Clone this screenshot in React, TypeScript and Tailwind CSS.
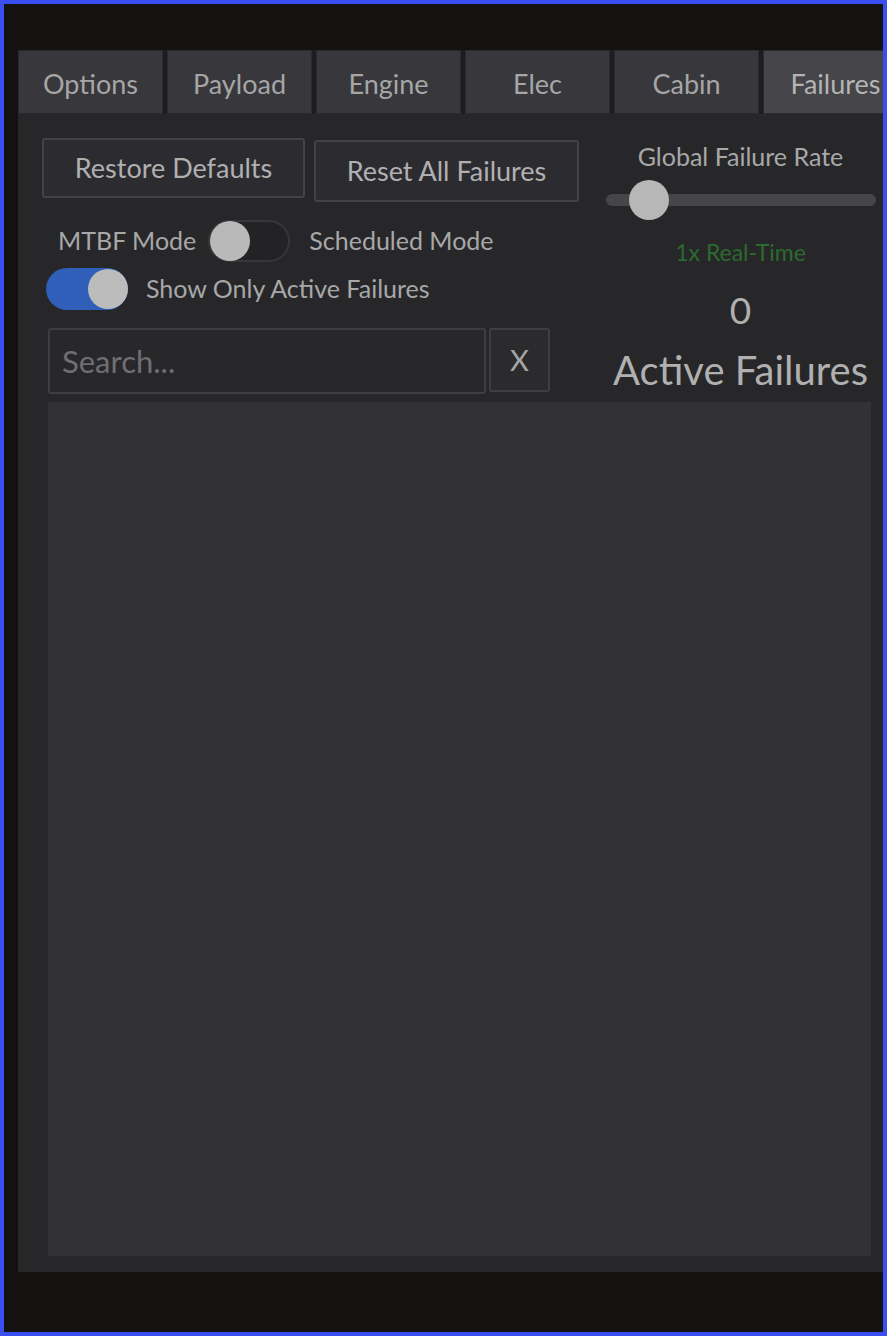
export default function App() {
  const tabs = ["Options", "Payload", "Engine", "Elec", "Cabin", "Failures"];

  return (
    <div
      className="w-[887px] h-[1336px] border-4 border-[#3b4ef2] bg-[#131211] overflow-hidden flex"
      style={{ fontFamily: "Lato, 'Open Sans', sans-serif" }}
    >
      <div className="mt-[46px] ml-[14px] flex-1 h-[1222px] flex flex-col bg-[#27272a] overflow-hidden">
        {/* tabs */}
        <div className="flex gap-[4px] h-[64px] bg-[#1d1d1f] shrink-0">
          {tabs.map((t) => (
            <div
              key={t}
              className={
                "w-[145px] shrink-0 flex items-center justify-center pt-[4px] text-[27px] border border-[#2a2a2d] " +
                (t === "Failures"
                  ? "bg-[#45454a] text-[#b4b4b4]"
                  : "bg-[#38383c] text-[#a6a6a6]")
              }
            >
              {t}
            </div>
          ))}
        </div>

        {/* body */}
        <div className="flex-1 flex flex-col px-[24px] pt-[24px] pb-[16px]">
          <div className="flex">
            {/* left column */}
            <div className="w-[556px] shrink-0 flex flex-col">
              <div className="flex gap-[9px]">
                <button className="w-[263px] h-[60px] rounded-[3px] border-2 border-[#434347] bg-[#2c2c30] text-[27px] text-[#b0b0b0]">
                  Restore Defaults
                </button>
                <button className="w-[265px] h-[62px] mt-[2px] rounded-[3px] border-2 border-[#434347] bg-[#2c2c30] text-[27px] text-[#b0b0b0]">
                  Reset All Failures
                </button>
              </div>

              <div className="flex items-center mt-[18px] ml-[16px] h-[42px]">
                <span className="text-[25px] text-[#a8a8a8]">MTBF Mode</span>
                <div className="ml-[12px] w-[82px] h-[42px] rounded-full border-2 border-[#37373b] bg-[#232326] flex items-center">
                  <div className="w-[40px] h-[40px] rounded-full bg-[#b9b9b9]" />
                </div>
                <span className="ml-[19px] text-[25px] text-[#a8a8a8]">Scheduled Mode</span>
              </div>

              <div className="flex items-center mt-[6px] ml-[4px] h-[42px]">
                <div className="w-[82px] h-[42px] rounded-full bg-[#2f5fb8] flex items-center justify-end">
                  <div className="w-[40px] h-[40px] rounded-full bg-[#bcbcbc]" />
                </div>
                <span className="ml-[18px] text-[25px] text-[#a8a8a8]">
                  Show Only Active Failures
                </span>
              </div>

              <div className="flex mt-[18px] ml-[6px] gap-[3px]">
                <div className="w-[438px] h-[66px] rounded-[3px] border-2 border-[#3e3e42] bg-[#28282b] flex items-center px-[12px] text-[31px] text-[#6f6f72]">
                  Search...
                </div>
                <div className="w-[61px] h-[64px] rounded-[3px] border-2 border-[#3e3e42] bg-[#2b2b2e] flex items-center justify-center text-[29px] text-[#a6a6a6]">
                  X
                </div>
              </div>
            </div>

            {/* right column */}
            <div className="flex-1 flex flex-col items-center mr-[-24px] pt-[2px]">
              <div className="text-[25px] text-[#a8a8a8] leading-[32px]">
                Global Failure Rate
              </div>
              <div className="relative w-[270px] h-[44px] mt-[6px] flex items-center">
                <div className="w-full h-[12px] rounded-full bg-[#45454a]" />
                <div className="absolute left-[23px] top-[2px] w-[40px] h-[40px] rounded-full bg-[#b7b7b7]" />
              </div>
              <div className="mt-[16px] text-[23px] text-[#2c6a2e] leading-[28px]">
                1x Real-Time
              </div>
              <div className="mt-[22px] text-[37px] text-[#b0b0b0] leading-[44px]">0</div>
              <div className="mt-[14px] text-[40px] text-[#b0b0b0] leading-[48px]">
                Active Failures
              </div>
            </div>
          </div>

          {/* failure list */}
          <div className="mt-[8px] ml-[6px] mr-[-12px] flex-1 bg-[#323236]" />
        </div>
      </div>
    </div>
  );
}
